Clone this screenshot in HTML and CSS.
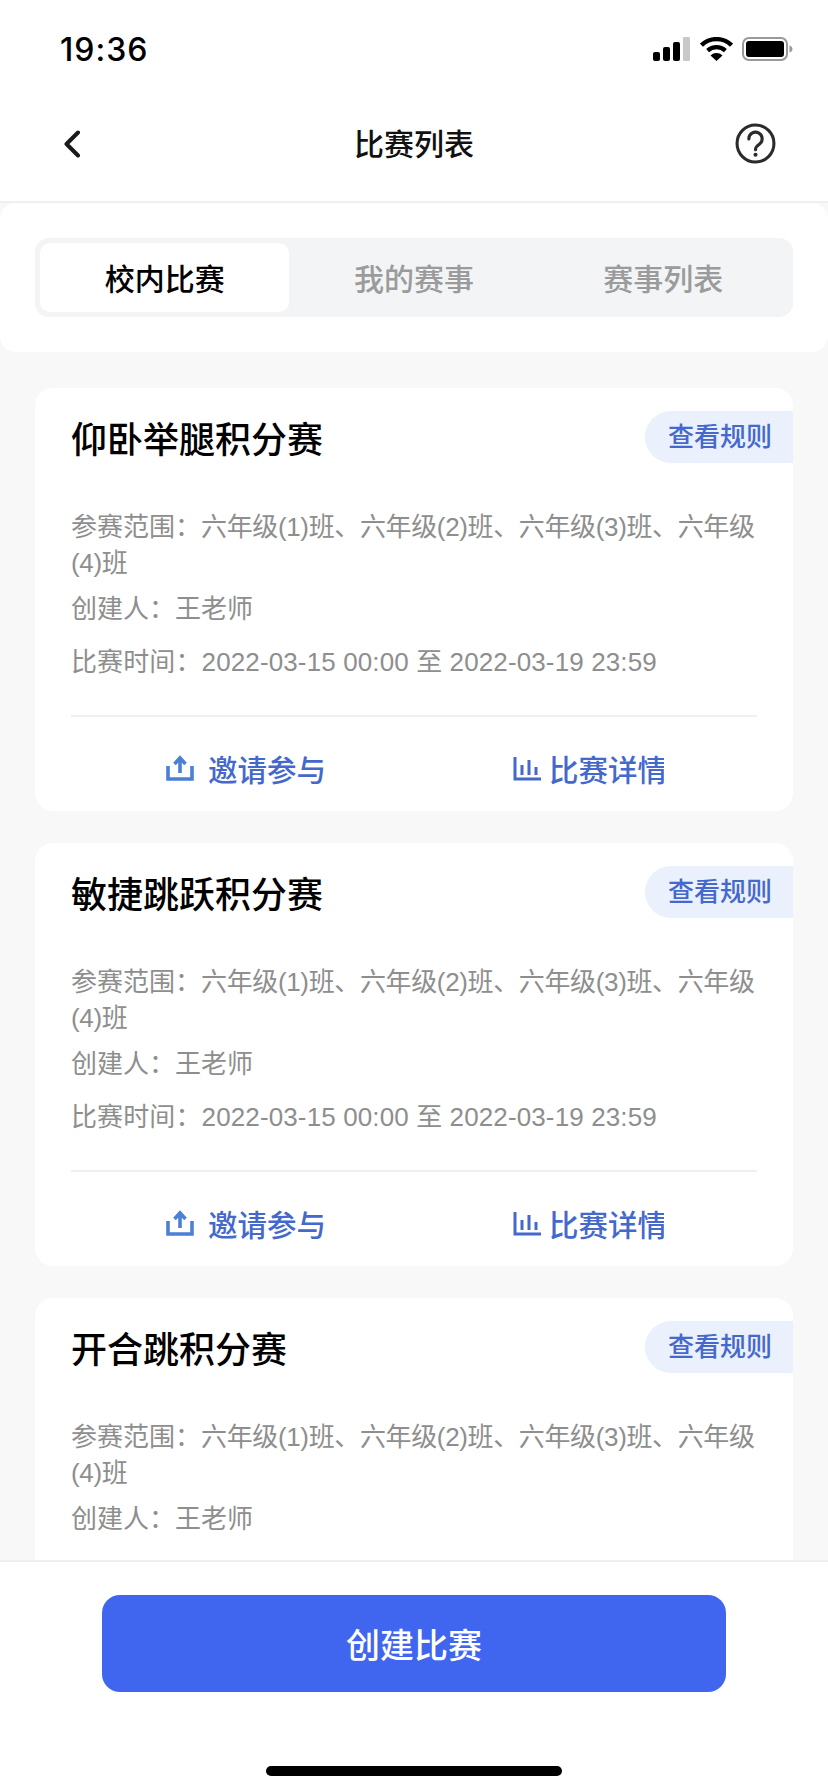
FILE: index.html
```html
<!DOCTYPE html>
<html lang="zh-CN">
<head>
    <meta charset="UTF-8">
    <meta name="viewport" content="width=device-width, initial-scale=1.0">
    <title>比赛列表</title>
    <link rel="stylesheet" href="styles.css">
</head>
<body>
    <div class="page">
        <div class="status-bar">
            <span class="time">19:36</span>
            <div class="status-icons">
                <svg width="38" height="24" viewBox="0 0 38 24">
                    <rect x="0" y="15" width="7" height="9" rx="2" fill="#000"/>
                    <rect x="10" y="10" width="7" height="14" rx="2" fill="#000"/>
                    <rect x="20" y="5" width="7" height="19" rx="2" fill="#000"/>
                    <rect x="30" y="0" width="7" height="24" rx="1" fill="#c9c9c9"/>
                </svg>
                <svg width="33" height="24" viewBox="0 0 33 24">
                    <path d="M1.5 8.2a21.5 21.5 0 0 1 30 0" fill="none" stroke="#000" stroke-width="4.4"/>
                    <path d="M7.6 13.6a13 13 0 0 1 17.8 0" fill="none" stroke="#000" stroke-width="4.2"/>
                    <path d="M16.5 24l-6-5.6a9 9 0 0 1 12 0z" fill="#000"/>
                </svg>
                <svg width="52" height="24" viewBox="0 0 52 24">
                    <rect x="1" y="1" width="44" height="22" rx="6" fill="none" stroke="#999" stroke-width="2"/>
                    <rect x="4" y="4" width="38" height="16" rx="3" fill="#000"/>
                    <path d="M47.500 8.500c2 .5 3 2 3 3.500s-1 3-3 3.500z" fill="#999"/>
                </svg>
            </div>
        </div>

        <div class="nav-bar">
            <svg class="back-icon" width="18" height="28" viewBox="0 0 18 28">
                <path d="M15 2.500L3.500 14L15 25.500" fill="none" stroke="#1a1a1a" stroke-width="4" stroke-linecap="round" stroke-linejoin="round"/>
            </svg>
            <h1 class="nav-title">比赛列表</h1>
            <svg class="help-icon" width="41" height="41" viewBox="0 0 40 40">
                <circle cx="20" cy="20" r="18" fill="none" stroke="#2b2b2b" stroke-width="3"/>
                <path d="M13.500 15.500a6.500 6.500 0 1 1 10.200 5.300c-2.300 1.600-3.700 2.600-3.700 5.200" fill="none" stroke="#2b2b2b" stroke-width="3" stroke-linecap="round"/>
                <circle cx="20" cy="31" r="2" fill="#2b2b2b"/>
            </svg>
        </div>

        <div class="tab-section">
            <div class="tabs">
                <div class="tab active">校内比赛</div>
                <div class="tab">我的赛事</div>
                <div class="tab">赛事列表</div>
            </div>
        </div>

        <div class="list">
            <div class="card">
                <div class="card-head">
                    <h2 class="card-title">仰卧举腿积分赛</h2>
                    <div class="rule-badge">查看规则</div>
                </div>
                <p class="meta"><span>参赛范围：</span><span class="range">六年级(1)班、六年级(2)班、六年级(3)班、六年级(4)班</span></p>
                <p class="meta creator">创建人：王老师</p>
                <p class="meta period">比赛时间：2022-03-15 00:00 至 2022-03-19 23:59</p>
                <div class="actions">
                    <div class="action">
                        <svg width="30" height="26" viewBox="0 0 30 26"><path d="M3 11v13h24V11M15 18V4M9.500 9L15 3l5.500 6" fill="none" stroke="#4a80d6" stroke-width="3.600"/></svg>
                        <span class="action-text">邀请参与</span>
                    </div>
                    <div class="action detail">
                        <svg width="28" height="26" viewBox="0 0 28 26"><path d="M2 2v22h26M9 10v10M16 5v15M23 12v8" fill="none" stroke="#4468cc" stroke-width="3"/></svg>
                        <span class="action-text">比赛详情</span>
                    </div>
                </div>
            </div>

            <div class="card">
                <div class="card-head">
                    <h2 class="card-title">敏捷跳跃积分赛</h2>
                    <div class="rule-badge">查看规则</div>
                </div>
                <p class="meta"><span>参赛范围：</span><span class="range">六年级(1)班、六年级(2)班、六年级(3)班、六年级(4)班</span></p>
                <p class="meta creator">创建人：王老师</p>
                <p class="meta period">比赛时间：2022-03-15 00:00 至 2022-03-19 23:59</p>
                <div class="actions">
                    <div class="action">
                        <svg width="30" height="26" viewBox="0 0 30 26"><path d="M3 11v13h24V11M15 18V4M9.500 9L15 3l5.500 6" fill="none" stroke="#4a80d6" stroke-width="3.600"/></svg>
                        <span class="action-text">邀请参与</span>
                    </div>
                    <div class="action detail">
                        <svg width="28" height="26" viewBox="0 0 28 26"><path d="M2 2v22h26M9 10v10M16 5v15M23 12v8" fill="none" stroke="#4468cc" stroke-width="3"/></svg>
                        <span class="action-text">比赛详情</span>
                    </div>
                </div>
            </div>

            <div class="card">
                <div class="card-head">
                    <h2 class="card-title">开合跳积分赛</h2>
                    <div class="rule-badge">查看规则</div>
                </div>
                <p class="meta"><span>参赛范围：</span><span class="range">六年级(1)班、六年级(2)班、六年级(3)班、六年级(4)班</span></p>
                <p class="meta creator">创建人：王老师</p>
            </div>
        </div>

        <div class="footer">
            <button class="create-button">创建比赛</button>
            <div class="home-bar"></div>
        </div>
    </div>
</body>
</html>
```

FILE: styles.css
```css
* {
    box-sizing: border-box;
}
body {
    margin: 0;
    font-family: "Liberation Sans", "Noto Sans CJK SC", sans-serif;
    background-color: #ffffff;
}
.page {
    display: flex;
    flex-direction: column;
    height: 100vh;
    overflow: hidden;
    background-color: #f8f8f8;
}

/* top of the screen */
.status-bar {
    display: flex;
    justify-content: space-between;
    align-items: center;
    height: 88px;
    padding: 10px 34px 0 60px;
    background-color: #ffffff;
}
.time {
    font-family: Inter, sans-serif;
    font-size: 32px;
    font-weight: 500;
    letter-spacing: 1px;
    color: #000000;
}
.status-icons {
    display: flex;
    align-items: center;
    gap: 9px;
}
.nav-bar {
    display: grid;
    grid-template-columns: 1fr auto 1fr;
    align-items: center;
    height: 115px;
    padding: 0 52px 2px;
    background-color: #ffffff;
    border-bottom: 2px solid #eff0f1;
}
.back-icon {
    margin-left: 11px;
}
.help-icon {
    justify-self: end;
}
.nav-title {
    margin: 0;
    padding-bottom: 3px;
    font-size: 30px;
    font-weight: 500;
    color: #111111;
}

/* tabs */
.tab-section {
    padding: 35px;
    background-color: #ffffff;
    border-radius: 16px;
}
.tabs {
    display: flex;
    height: 79px;
    padding: 5px;
    background-color: #f2f4f6;
    border-radius: 14px;
}
.tab {
    flex: 1;
    display: flex;
    justify-content: center;
    align-items: center;
    padding-bottom: 2px;
    font-size: 30px;
    font-weight: 500;
    color: #9b9b9b;
    border-radius: 10px;
}
.tab.active {
    background-color: #ffffff;
    color: #000000;
}

/* cards */
.list {
    flex: 1;
    min-height: 0;
    overflow: hidden;
    display: flex;
    flex-direction: column;
    gap: 32px;
    padding: 36px 35px 0;
}
.card {
    flex-shrink: 0;
    height: 423px;
    padding: 23px 0 0 36px;
    background-color: #ffffff;
    border-radius: 18px;
    overflow: hidden;
}
.card-head {
    display: flex;
    justify-content: space-between;
    align-items: center;
    height: 52px;
    margin-bottom: 46px;
}
.card-title {
    margin: 0;
    font-size: 36px;
    font-weight: 500;
    color: #000000;
}
.rule-badge {
    width: 148px;
    height: 52px;
    padding-left: 23px;
    font-size: 26px;
    font-weight: 500;
    line-height: 52px;
    color: #4468cc;
    background-color: #eaf1fc;
    border-radius: 26px 0 0 26px;
}
.meta {
    margin: 0;
    padding-right: 30px;
    font-size: 26px;
    line-height: 36px;
    color: #8e8e8e;
}
.range {
    letter-spacing: -0.36px;
}
.creator {
    margin-top: 10px;
}
.period {
    margin-top: 17px;
    letter-spacing: 0.12px;
}
.actions {
    display: grid;
    grid-template-columns: 1fr 1fr;
    width: 686px;
    height: 96px;
    margin-top: 35px;
    padding-top: 26px;
    border-top: 2px solid #f0f0f0;
}
.action {
    display: flex;
    align-items: center;
    gap: 13px;
    height: 50px;
    padding-left: 94px;
}
.action-text {
    white-space: nowrap;
    font-size: 29.5px;
    font-weight: 500;
    color: #4468cc;
}
.detail {
    gap: 8px;
    padding-left: 99px;
}
.detail .action-text {
    width: 115px;
    overflow: hidden;
}

/* bottom button */
.footer {
    display: flex;
    flex-direction: column;
    align-items: center;
    height: 232px;
    padding-top: 33px;
    background-color: #ffffff;
    border-top: 2px solid #eeeeee;
}
.create-button {
    width: 624px;
    height: 97px;
    padding-bottom: 2px;
    font-family: inherit;
    font-size: 34px;
    font-weight: 500;
    color: #ffffff;
    background-color: #4066f0;
    border: none;
    border-radius: 18px;
}
.home-bar {
    width: 296px;
    height: 10px;
    margin-top: 74px;
    background-color: #000000;
    border-radius: 5px;
}
```
